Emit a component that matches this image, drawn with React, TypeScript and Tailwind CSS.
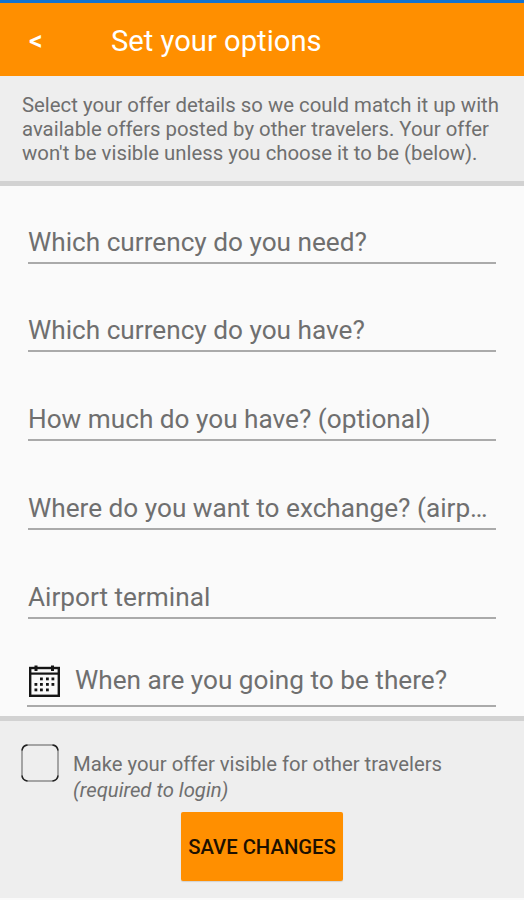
const fields = [
  { label: "Which currency do you need?", height: "h-[78px]" },
  { label: "Which currency do you have?", height: "h-[88px]" },
  { label: "How much do you have? (optional)", height: "h-[89px]" },
  { label: "Where do you want to exchange? (airp…", height: "h-[89px]" },
  { label: "Airport terminal", height: "h-[89px]" },
];

// Calendar dots: first row starts one column in, last row ends one column early
const dots = [
  [11, 12.5], [17, 12.5], [22.5, 12.5],
  [5.5, 18], [11, 18], [17, 18], [22.5, 18],
  [5.5, 23.5], [11, 23.5], [17, 23.5],
];

function CalendarIcon() {
  return (
    <svg width="31" height="32" viewBox="0 0 31 32" fill="none" className="shrink-0">
      <rect x="1.2" y="3" width="28.6" height="27.8" stroke="#151515" strokeWidth="2.4" />
      <path d="M1 8.6H30" stroke="#151515" strokeWidth="2.2" />
      <path d="M7 0.5V6M23.5 0.5V6" stroke="#151515" strokeWidth="3" />
      {dots.map(([x, y]) => (
        <rect key={`${x}-${y}`} x={x} y={y} width="2.8" height="2.8" fill="#151515" />
      ))}
    </svg>
  );
}

function Checkbox() {
  return (
    <svg width="38" height="38" viewBox="0 0 38 38" fill="none" className="shrink-0">
      <rect x="1" y="1" width="36" height="36" rx="6" stroke="#8c8c8c" strokeWidth="1.5" />
      <path
        d="M1 6.5Q1.5 1.5 6.5 1M31.5 1Q36.5 1.5 37 6.5M37 31.5Q36.5 36.5 31.5 37M6.5 37Q1.5 36.5 1 31.5"
        stroke="#222"
        strokeWidth="1.5"
      />
    </svg>
  );
}

export default function App() {
  return (
    <div className="flex h-[900px] w-[524px] flex-col overflow-hidden bg-[#fafafa] font-['Roboto',sans-serif] text-[#6f6f6f]">
      <div className="h-[3px] shrink-0 bg-[#1273d2]" />
      <header className="flex h-[73px] shrink-0 items-center bg-[#ff8f00] pt-[4px] text-white">
        <button className="ml-[29px] w-[82px] text-left text-[27px] leading-none font-medium">
          &lt;
        </button>
        <h1 className="text-[29.2px] leading-none whitespace-nowrap">Set your options</h1>
      </header>

      <p className="h-[110px] shrink-0 border-b-[5px] border-[#d2d2d2] bg-[#eee] pt-[17px] pl-[22px] text-[20.35px] leading-6 whitespace-nowrap">
        Select your offer details so we could match it up with
        <br />
        available offers posted by other travelers. Your offer
        <br />
        won't be visible unless you choose it to be (below).
      </p>

      <main className="h-[530px] shrink-0 px-7">
        {fields.map((field) => (
          <div
            key={field.label}
            className={`flex flex-col justify-end border-b-2 border-[#aaa] pb-1 ${field.height}`}
          >
            <span className="text-[26.2px] leading-8 whitespace-nowrap">{field.label}</span>
          </div>
        ))}
        <div className="-ml-px flex h-[88px] items-end border-b-2 border-[#aaa] pb-[8px]">
          <div className="ml-[2px] flex w-[46px]">
            <CalendarIcon />
          </div>
          <span className="mb-px text-[26.2px] leading-8 whitespace-nowrap">
            When are you going to be there?
          </span>
        </div>
      </main>

      <footer className="h-[182px] shrink-0 border-t-[5px] border-[#d2d2d2] bg-[#eee]">
        <div className="flex h-[82px]">
          <div className="mt-[23px] ml-[21px] w-[52px]">
            <Checkbox />
          </div>
          <p className="mt-[30px] text-[20.3px] leading-[26px] whitespace-nowrap">
            Make your offer visible for other travelers
            <br />
            <em>(required to login)</em>
          </p>
        </div>
        <button className="mt-[9px] ml-[181px] flex h-[69px] w-[162px] items-center justify-center rounded-[2px] bg-[#ff8f00] pt-[2px] text-[20.3px] font-medium whitespace-nowrap text-[#1c1000] shadow-[0_1px_1px_rgba(0,0,0,0.12)]">
          SAVE CHANGES
        </button>
      </footer>
    </div>
  );
}
